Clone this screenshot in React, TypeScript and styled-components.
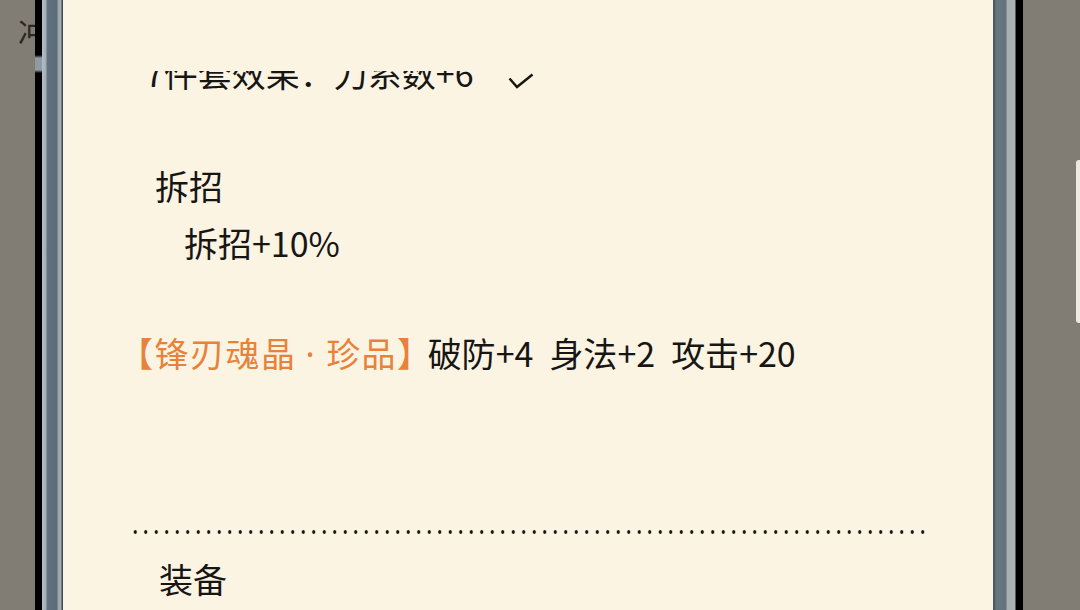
import React from "react";
import styled, { createGlobalStyle } from "styled-components";

const GlobalStyle = createGlobalStyle`
  html, body {
    margin: 0;
    padding: 0;
    background: #817d74;
  }
  body {
    font-family: "Noto Sans CJK SC", "Noto Sans", sans-serif;
    color: #171614;
  }
`;

type Stat = { name: string; value: string };

const gemStats: Stat[] = [
  { name: "破防", value: "+4" },
  { name: "身法", value: "+2" },
  { name: "攻击", value: "+20" },
];

function App() {
  return (
    <>
      <GlobalStyle />
      <Screen>
        <Gutter>
          <SideGlyph>冲</SideGlyph>
        </Gutter>
        <LeftRail />
        <Panel>
          <ClipLine>
            <SetLine>
              7件套效果：刀系数+6
              <Check viewBox="0 0 26 16">
                <polyline points="1.5,5.5 9,14 24.5,1.5" />
              </Check>
            </SetLine>
          </ClipLine>
          <Line $indent={22} $top={62}>拆招</Line>
          <Line $indent={51} $top={11}>拆招+10%</Line>
          <Line $indent={-14} $top={64}>
            <Gem>
              【锋刃魂晶<GemDot>·</GemDot>珍品】
            </Gem>
            {gemStats.map((s, i) => (
              <StatItem key={s.name} $first={i === 0}>
                {s.name}
                {s.value}
              </StatItem>
            ))}
          </Line>
          <Dotted />
          <Line $indent={26} $top={22}>装备</Line>
        </Panel>
        <RightRail />
        <RightGutter>
          <Tab />
        </RightGutter>
      </Screen>
    </>
  );
}

const Screen = styled.div`
  display: flex;
  width: 1080px;
  height: 610px;
  overflow: hidden;
  background: #817d74;
`;

const Gutter = styled.div`
  width: 35px;
  flex-shrink: 0;
  overflow: hidden;
  padding-top: 12px;
  box-sizing: border-box;
`;

const SideGlyph = styled.div`
  font-size: 30px;
  line-height: 38px;
  color: #2a2824;
  margin-left: 18px;
  white-space: nowrap;
`;

const LeftRail = styled.div`
  width: 28px;
  flex-shrink: 0;
  background:
    linear-gradient(
      to bottom,
      #000 0px,
      #000 55px,
      #8f9ba3 58px,
      #8f9ba3 70px,
      #000 73px,
      #000 100%
    ) left / 7px 100% no-repeat,
    linear-gradient(
      to right,
      transparent 7px,
      #b3bec5 7px,
      #a2aeb5 11px,
      #627380 12px,
      #5b6c78 22px,
      #98a3aa 23px,
      #a4adb2 26px,
      #3e4a52 27px
    );
`;

const Panel = styled.main`
  width: 930px;
  flex-shrink: 0;
  box-sizing: border-box;
  background: #fcf4e3;
  padding: 71px 68px 0 70px;
  display: flex;
  flex-direction: column;
`;

const ClipLine = styled.div`
  height: 30px;
  overflow: hidden;
  flex-shrink: 0;
`;

const SetLine = styled.div`
  margin-top: -21px;
  margin-left: 12px;
  font-size: 34px;
  line-height: 46px;
  height: 46px;
  white-space: nowrap;
  display: flex;
  align-items: flex-start;
`;

const Check = styled.svg`
  width: 26px;
  height: 16px;
  margin: 23px 0 0 34px;
  flex-shrink: 0;
  fill: none;
  stroke: #171614;
  stroke-width: 2.5;
`;

const Line = styled.div<{ $indent: number; $top: number }>`
  margin-left: ${(p) => p.$indent}px;
  margin-top: ${(p) => p.$top}px;
  font-size: 34px;
  line-height: 46px;
  white-space: nowrap;
  flex-shrink: 0;
`;

const Gem = styled.span`
  color: #e8823a;
  letter-spacing: 1.5px;
`;

const GemDot = styled.span`
  font-family: "Noto Sans", sans-serif;
  padding: 0 10px 0 9px;
`;

const StatItem = styled.span<{ $first: boolean }>`
  margin-left: ${(p) => (p.$first ? -5 : 16)}px;
`;

const Dotted = styled.div`
  margin: 153px 0 0 -3px;
  height: 4px;
  width: 795px;
  flex-shrink: 0;
  background: radial-gradient(circle, #171614 1.5px, transparent 2px) 0 0 /
    10.5px 4px repeat-x;
`;

const RightRail = styled.div`
  width: 30px;
  flex-shrink: 0;
  background: linear-gradient(
    to right,
    #4a5760 0px,
    #4f5d66 2px,
    #66777f 3px,
    #62737d 13px,
    #a6aeb1 14px,
    #aab2b4 22px,
    #000 23px,
    #000 30px
  );
`;

const RightGutter = styled.div`
  flex: 1;
  display: flex;
  justify-content: flex-end;
  align-items: flex-start;
  padding-top: 160px;
`;

const Tab = styled.div`
  width: 4px;
  height: 163px;
  background: #ece8e2;
  border-radius: 3px 0 0 3px;
`;

export default App;
